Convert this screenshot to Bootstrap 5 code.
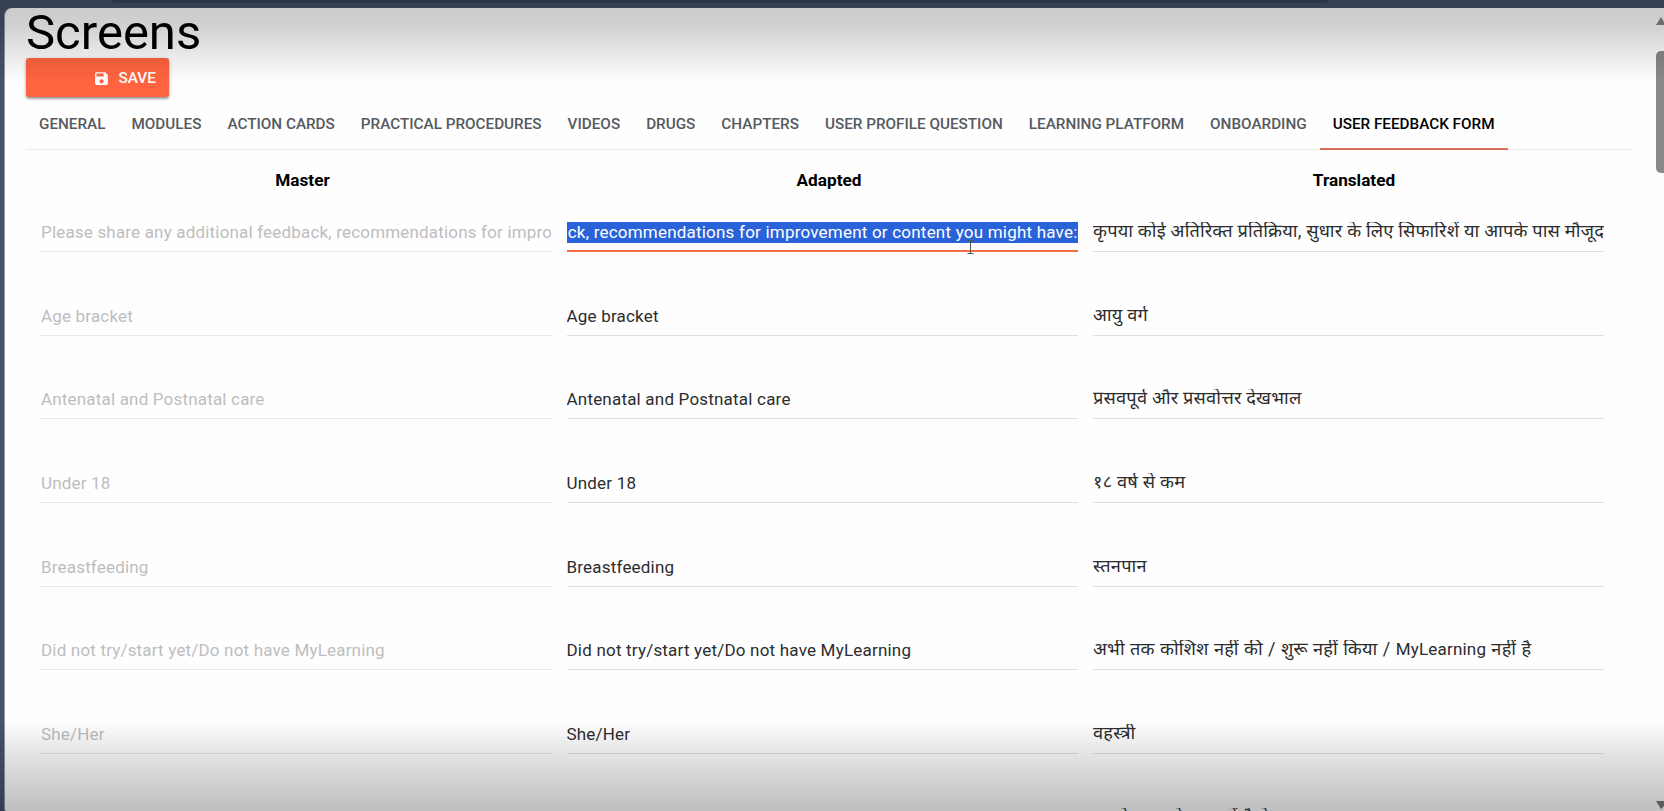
<!DOCTYPE html>
<html lang="en">
<head>
<meta charset="utf-8">
<title>Screens</title>
<link href="https://cdn.jsdelivr.net/npm/bootstrap@5.3.0/dist/css/bootstrap.min.css" rel="stylesheet">
<script src="https://cdn.jsdelivr.net/npm/bootstrap@5.3.0/dist/js/bootstrap.bundle.min.js"></script>
<style>
html,body{height:100%;overflow:hidden}
body{background:#44526c;font-family:Roboto,"Noto Sans Devanagari","Noto Sans",sans-serif;color:#000}
.topstrip{height:8px;background:#44526c;padding:0 336px 0 112px}
.topstrip div{height:3px;background:#36445a;border-radius:0 0 6px 6px}
.stage{height:803px;margin-left:4px;background:#fefefe;border-radius:8px 0 0 2px;border-left:1px solid #8f98a8;overflow:hidden}
.page-body{padding:0 0 0 21px;width:1627px;flex:none}
h1{font-size:49px;line-height:50px;font-weight:400;margin:0;height:50px}
.btn-save{background:#ff633f;color:#fff;width:143px;height:39px;border-radius:3px;font-size:15.4px;font-weight:500;padding:2px 13px 0 0;box-shadow:0 2px 2px rgba(0,0,0,.28),0 1px 4px rgba(0,0,0,.2);border:0}
.tabs{height:51px;border-bottom:1px solid #ebebec;margin-top:2px;width:1606px}
.tabs a:not([href]){padding:0 13px;line-height:50px;font-size:15.27px;color:#555a60;white-space:nowrap;font-weight:500;text-decoration:none}
.tabs a.active:not([href]){color:#000;border-bottom:2px solid #da6e5d;height:51px}
.fields{padding:0 0 0 14px;display:grid;grid-template-columns:repeat(3,511px);column-gap:15.5px}
.head{font-size:17.2px;font-weight:700;line-height:24px;height:50px;padding:18px 0 0 14px;text-align:center}
.head:nth-child(3){padding-left:11px}
.fld{height:83.7px;padding-top:22px}
.line{height:30px;border-bottom:1px solid #dfdfe0;overflow:hidden}
.line>span{display:block;font-size:17px;letter-spacing:.2px;height:21px;line-height:20px;overflow:hidden;white-space:nowrap;color:#2c2c2e}
.off .line{border-bottom-style:dotted;border-bottom-color:#d2d2d4}
.off .line>span{color:#bdbdbf;padding-left:1px;letter-spacing:.18px}
.focus .line{border-bottom:2px solid #f96a48}
.focus .line>span{background:#2a63d9;color:#fff;display:flex;justify-content:flex-end;letter-spacing:.21px}
.hi .line>span{font-size:18.2px;line-height:18px}
.hi .latin{font-size:17px}
.hi .line>.mixed{word-spacing:.5px}
.caret{position:absolute;left:967px;top:240px}
.shade{position:absolute;left:0;right:0;pointer-events:none}
.shade.up{top:0;height:82px;background:linear-gradient(rgba(0,0,0,.21),rgba(0,0,0,.18) 30%,rgba(0,0,0,.09) 65%,transparent)}
.shade.down{bottom:0;height:90px;background:linear-gradient(transparent,rgba(0,0,0,.10) 35%,rgba(0,0,0,.25))}
.bar{width:8px}
.bar .thumb{height:122px;width:14px;border-radius:5px;background:#888;margin-top:26px}
.bar .arrow-up{margin-top:9px}
.bar .arrow-down{margin-bottom:2px}
</style>
</head>
<body>
<div class="topstrip"><div></div></div>
<main class="stage d-flex justify-content-between">
 <div class="page-body">
  <h1>Screens</h1>
  <button class="btn-save d-flex align-items-center justify-content-end" type="button">
   <svg class="me-2" width="17" height="17" viewBox="0 0 24 24" fill="#fff"><path d="M17 3H5a2 2 0 0 0-2 2v14a2 2 0 0 0 2 2h14a2 2 0 0 0 2-2V7zM12 19a3 3 0 1 1 0-6 3 3 0 0 1 0 6zm3-10H5V5h10z"/></svg>SAVE</button>
  <nav class="tabs d-flex"><a>GENERAL</a><a>MODULES</a><a>ACTION CARDS</a><a>PRACTICAL PROCEDURES</a><a>VIDEOS</a><a>DRUGS</a><a>CHAPTERS</a><a>USER PROFILE QUESTION</a><a>LEARNING PLATFORM</a><a>ONBOARDING</a><a class="active">USER FEEDBACK FORM</a></nav>
  <section class="fields">
   <div class="head">Master</div><div class="head">Adapted</div><div class="head">Translated</div>
   <div class="fld off"><div class="line"><span>Please share any additional feedback, recommendations for impro</span></div></div>
   <div class="fld focus"><div class="line"><span>ck, recommendations for improvement or content you might have:</span></div></div>
   <div class="fld hi"><div class="line"><span>कृपया कोई अतिरिक्त प्रतिक्रिया, सुधार के लिए सिफारिशें या आपके पास मौजूद</span></div></div>
   <div class="fld off"><div class="line"><span>Age bracket</span></div></div>
   <div class="fld"><div class="line"><span>Age bracket</span></div></div>
   <div class="fld hi"><div class="line"><span>आयु वर्ग</span></div></div>
   <div class="fld off"><div class="line"><span>Antenatal and Postnatal care</span></div></div>
   <div class="fld"><div class="line"><span>Antenatal and Postnatal care</span></div></div>
   <div class="fld hi"><div class="line"><span>प्रसवपूर्व और प्रसवोत्तर देखभाल</span></div></div>
   <div class="fld off"><div class="line"><span>Under 18</span></div></div>
   <div class="fld"><div class="line"><span>Under 18</span></div></div>
   <div class="fld hi"><div class="line"><span>१८ वर्ष से कम</span></div></div>
   <div class="fld off"><div class="line"><span>Breastfeeding</span></div></div>
   <div class="fld"><div class="line"><span>Breastfeeding</span></div></div>
   <div class="fld hi"><div class="line"><span>स्तनपान</span></div></div>
   <div class="fld off"><div class="line"><span>Did not try/start yet/Do not have MyLearning</span></div></div>
   <div class="fld"><div class="line"><span>Did not try/start yet/Do not have MyLearning</span></div></div>
   <div class="fld hi"><div class="line"><span class="mixed">अभी तक कोशिश नहीं की / शुरू नहीं किया / <span class="latin">MyLearning</span> नहीं है</span></div></div>
   <div class="fld off"><div class="line"><span>She/Her</span></div></div>
   <div class="fld"><div class="line"><span>She/Her</span></div></div>
   <div class="fld hi"><div class="line"><span>वहस्त्री</span></div></div>
   <div class="fld off"></div>
   <div class="fld"></div>
   <div class="fld hi"><div class="line"><span>यह ऐप आपके काम में कैसे</span></div></div>
  </section>
 </div>
 <div class="bar d-flex flex-column">
  <svg class="arrow-up flex-shrink-0" width="8" height="8" viewBox="0 0 8 8"><path d="M0 8 5 0l3 5v3z" fill="#858585"/></svg>
  <div class="thumb"></div>
  <svg class="arrow-down mt-auto flex-shrink-0" width="8" height="8" viewBox="0 0 8 8"><path d="M0 0h8v5L5 8z" fill="#777"/></svg>
 </div>
</main>
<div class="shade up"></div><div class="shade down"></div>
<svg class="caret" width="7" height="14" viewBox="0 0 7 14" fill="none" stroke="#555"><path d="M.5 .5h6M.5 13.5h6M3.5 .5v13"/></svg>
</body>
</html>
